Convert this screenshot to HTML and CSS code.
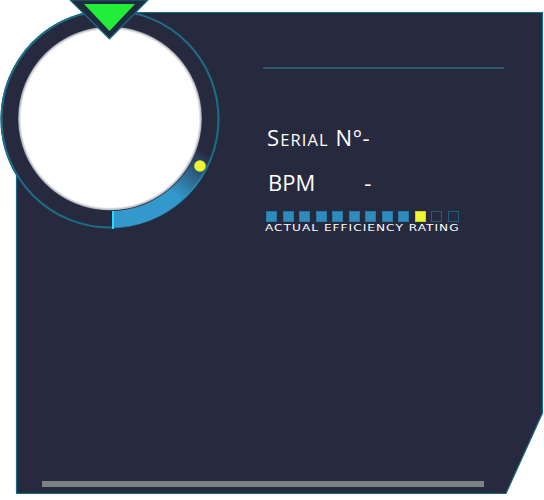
FILE: index.html
```html
<!DOCTYPE html>
<html>
<head>
<meta charset="utf-8">
<link rel="stylesheet" href="styles.css">
</head>
<body>
<div class="widget">
  <svg class="frame" width="544" height="500" viewBox="0 0 544 500">
    <path d="M 133 12.5 L 542.5 12.5 L 542.5 413 L 506 493.5 L 16.5 493.5 L 16.5 175 A 109 109 0 0 1 133 12.5 Z" fill="#272a3f" stroke="#1d6a84" stroke-width="1.2"/>
  </svg>

  <svg class="gauge" width="224" height="234" viewBox="0 0 224 234">
    <defs>
      <linearGradient id="arcGrad" gradientUnits="userSpaceOnUse" x1="140" y1="222" x2="204" y2="150">
        <stop offset="0" stop-color="#3399cc"/>
        <stop offset="0.45" stop-color="#3399cc"/>
        <stop offset="1" stop-color="#3399cc" stop-opacity="0"/>
      </linearGradient>
      <radialGradient id="faceGrad" cx="110" cy="118.5" r="92" gradientUnits="userSpaceOnUse">
        <stop offset="0.965" stop-color="#ffffff"/>
        <stop offset="0.99" stop-color="#b9bcc4"/>
        <stop offset="1" stop-color="#6b7080"/>
      </radialGradient>
    </defs>
    <circle cx="110" cy="119" r="108.5" fill="#272a3f" stroke="#1d6d86" stroke-width="2"/>
    <path d="M 113.5 219.4 A 100.5 100.5 0 0 0 204.4 153.4" fill="none" stroke="url(#arcGrad)" stroke-width="16.5"/>
    <rect x="112" y="211" width="2" height="18" fill="#22ddff"/>
    <circle cx="110" cy="118.5" r="92" fill="url(#faceGrad)"/>
    <circle cx="200" cy="166" r="5.8" fill="#eef533"/>
    <polygon points="70,0 148,0 109.5,39" fill="#1e2c3e" stroke="#1d6d86" stroke-width="1.2"/>
    <polygon points="84,4 135,4 109.5,31" fill="#22ee3a"/>
  </svg>

  <div class="info">
    <div class="rule"></div>
    <div class="field serial">S<span class="sc">ERIAL</span> Nº-</div>
    <div class="field bpm">BPM<span class="value">-</span></div>
    <div class="rating">
      <span class="cell on"></span><span class="cell on"></span><span class="cell on"></span><span class="cell on"></span><span class="cell on"></span><span class="cell on"></span><span class="cell on"></span><span class="cell on"></span><span class="cell on"></span><span class="cell current"></span><span class="cell off"></span><span class="cell off"></span>
    </div>
    <div class="rating-label">ACTUAL EFFICIENCY RATING</div>
  </div>

  <div class="bar"></div>
</div>
</body>
</html>
```

FILE: styles.css
```css
html, body {
  margin: 0;
  padding: 0;
  background: #ffffff;
}

.widget {
  position: relative;
  width: 544px;
  height: 500px;
  display: flex;
  flex-direction: column;
  overflow: hidden;
}

.frame {
  position: absolute;
  left: 0;
  top: 0;
}

.gauge {
  position: absolute;
  left: 0;
  top: 0;
}

.info {
  position: relative;
  margin-left: 263px;
  padding-top: 67px;
  display: flex;
  flex-direction: column;
  align-items: flex-start;
  color: #ffffff;
}

.rule {
  width: 241px;
  height: 2px;
  background: #2a5a70;
}

.field {
  font-family: "Open Sans", sans-serif;
  font-size: 22px;
  line-height: 22px;
  height: 22px;
  margin-left: 4px;
}

.serial {
  letter-spacing: 1.1px;
  margin-top: 57px;
}

.serial .sc {
  font-size: 16.5px;
  line-height: 1;
}

.bpm {
  margin-top: 23px;
  margin-left: 5px;
}

.bpm .value {
  margin-left: 49px;
}

.rating {
  display: flex;
  gap: 5.5px;
  margin-top: 18px;
  margin-left: 3px;
}

.cell {
  width: 11px;
  height: 11px;
  box-sizing: border-box;
}

.cell.on {
  background: #2e8bbb;
  border: 1px solid #2878a6;
}

.cell.current {
  background: #eef533;
  border: 1px solid #c8d02a;
}

.cell.off {
  background: #272a3f;
  border: 1.5px solid #1f5f78;
}

.rating-label {
  font-family: "DejaVu Sans", sans-serif;
  font-size: 9px;
  line-height: 9px;
  letter-spacing: 0.75px;
  white-space: nowrap;
  margin-top: 2px;
  margin-left: 2px;
  transform: scaleX(1.35);
  transform-origin: left center;
}

.bar {
  position: relative;
  margin-top: auto;
  margin-left: 42px;
  margin-bottom: 13px;
  width: 442px;
  height: 6px;
  background: #7a8583;
}
```
